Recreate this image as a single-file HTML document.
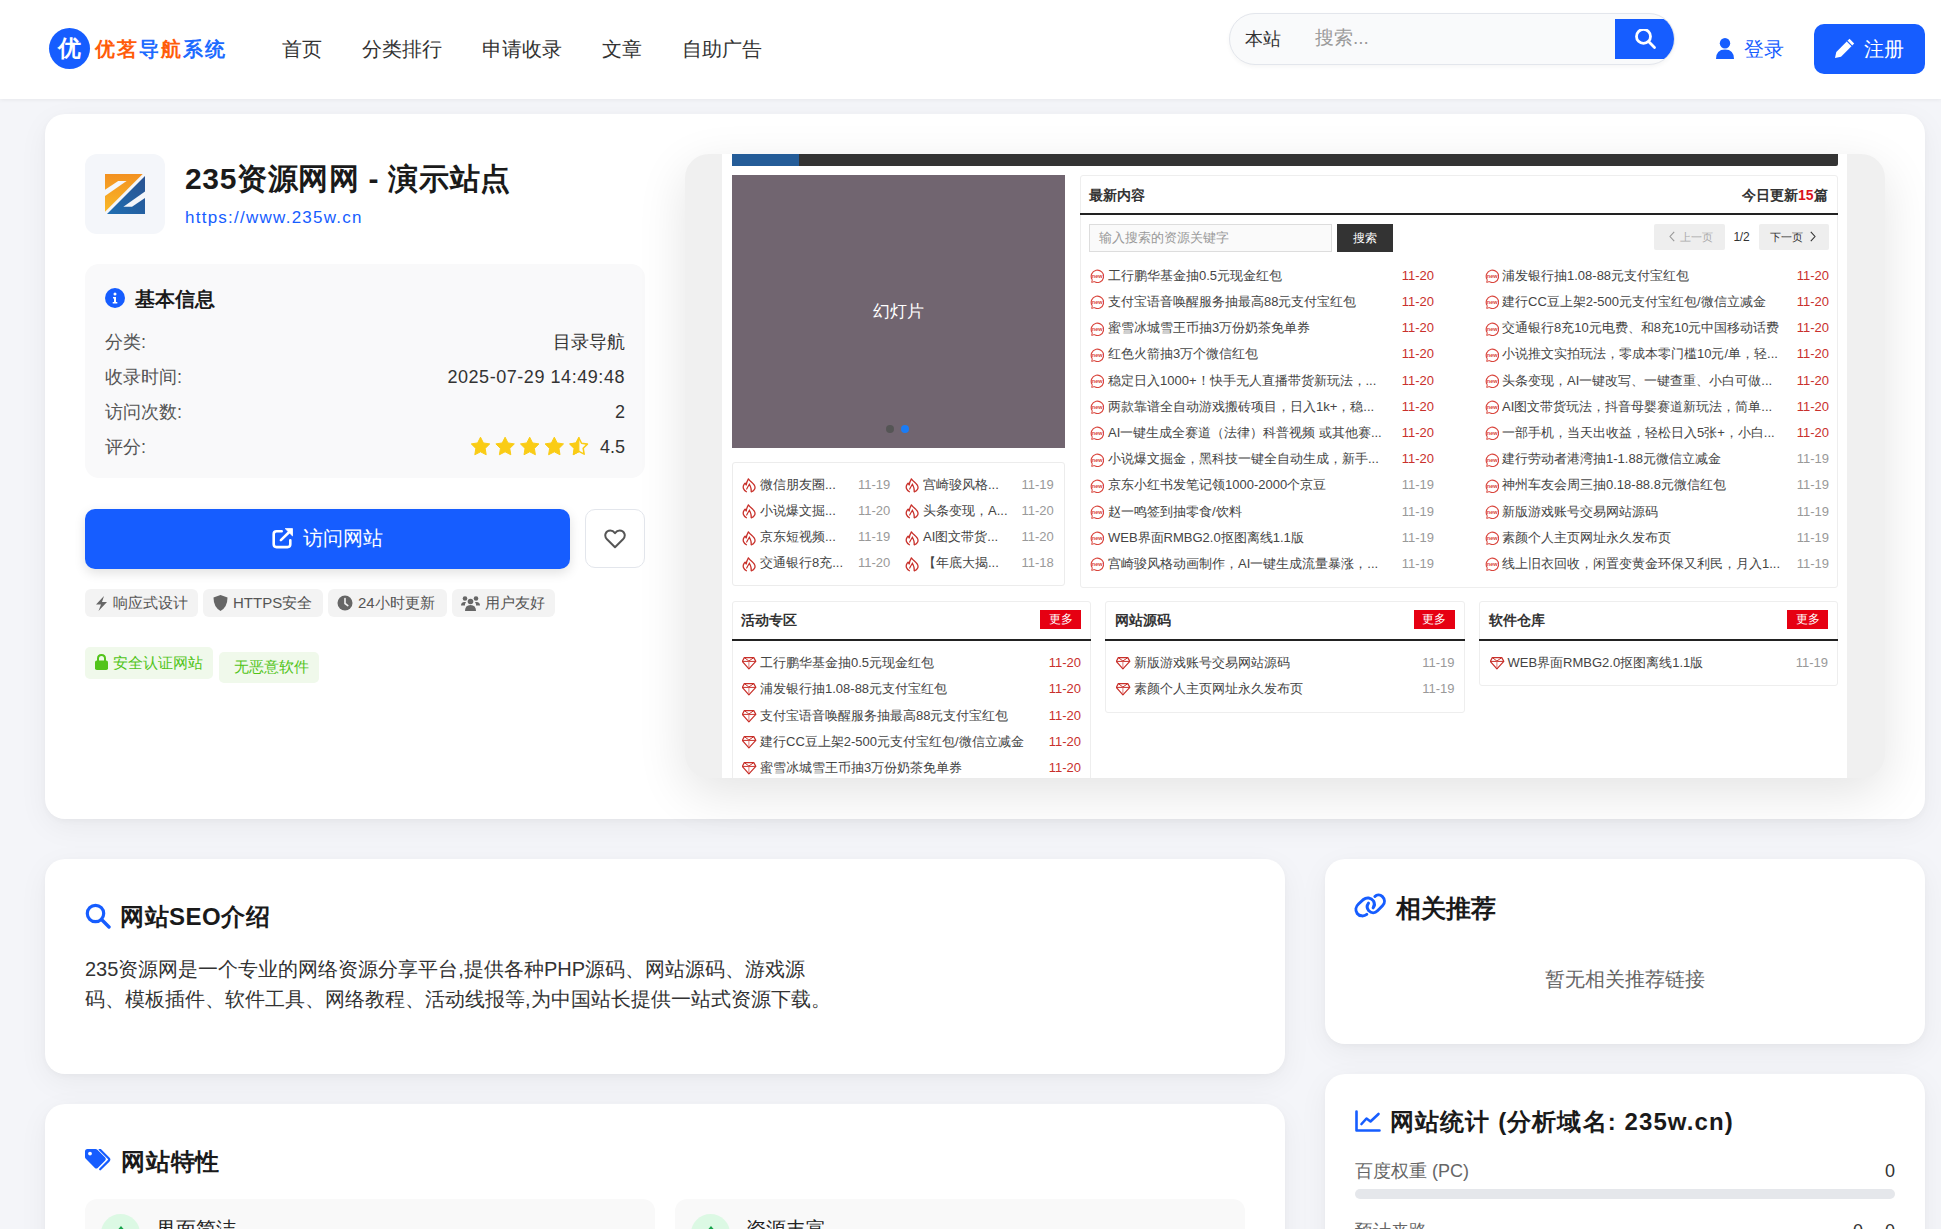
<!DOCTYPE html>
<html><head><meta charset="utf-8">
<style>
*{box-sizing:border-box;margin:0;padding:0}
html,body{width:1941px;height:1229px;overflow:hidden}
body{background:#f4f5f9;font-family:"Liberation Sans",sans-serif;color:#333;position:relative}
.abs{position:absolute}
.hdr{position:absolute;left:0;top:0;width:1941px;height:99px;background:#fff;box-shadow:0 1px 4px rgba(0,0,0,.06)}
.nav{position:absolute;top:36px;font-size:20px;line-height:26px;color:#333;white-space:nowrap}
.card{position:absolute;background:#fff;border-radius:20px;box-shadow:0 2px 6px rgba(0,0,0,.03),0 8px 30px rgba(0,0,0,.05)}
svg{display:block}
.a{position:absolute}
.ic{position:absolute;left:0;top:0}
.info{font-size:18px;line-height:24px;color:#555;white-space:nowrap}
.infov{font-size:18px;line-height:24px;color:#333;white-space:nowrap;text-align:right}
.tag{top:589px;height:28px;border-radius:6px;background:#f3f3f3}
.tag span{position:absolute;top:4px;font-size:15px;line-height:20px;color:#555;white-space:nowrap}
.ti{position:absolute}

</style></head><body>

<!-- HEADER -->
<div class="hdr">
  <div class="abs" style="left:49px;top:28px;width:41px;height:41px;border-radius:50%;background:#165dff;color:#fff;font-size:23px;font-weight:bold;line-height:41px;text-align:center">优</div>
  <div class="abs" style="left:95px;top:35px;font-size:20px;font-weight:bold;letter-spacing:2px;line-height:28px;white-space:nowrap"><span style="color:#ff5c0a">优茗</span><span style="color:#1d6bff">导</span><span style="color:#ff5c0a">航</span><span style="color:#1d6bff">系统</span></div>
  <div class="nav" style="left:282px">首页</div>
  <div class="nav" style="left:362px">分类排行</div>
  <div class="nav" style="left:482px">申请收录</div>
  <div class="nav" style="left:602px">文章</div>
  <div class="nav" style="left:682px">自助广告</div>

  <div class="abs" style="left:1229px;top:13px;width:446px;height:52px;border:1px solid #e3e6ec;border-radius:26px;background:#f9fafb;box-shadow:0 2px 4px rgba(0,0,0,.04);overflow:hidden">
    <div class="abs" style="left:385px;top:5px;width:80px;height:40px;background:#165dff"></div>
  </div>
  <div class="abs" style="left:1245px;top:27px;font-size:18px;line-height:24px;color:#333">本站</div>
  <div class="abs" style="left:1315px;top:26px;font-size:19px;line-height:24px;color:#999">搜索...</div>
  <svg class="abs" style="left:1635px;top:29px" width="22" height="22" viewBox="0 0 22 22"><circle cx="8.5" cy="7.4" r="7" fill="none" stroke="#fff" stroke-width="2.8"/><path d="M13.8 12.8 L19.5 18.4" stroke="#fff" stroke-width="2.8" stroke-linecap="round"/></svg>

  <svg class="abs" style="left:1716px;top:38px" width="18" height="21" viewBox="0 0 18 21"><circle cx="9" cy="5.2" r="5.2" fill="#165dff"/><path d="M0 21 Q0 11.5 9 11.5 Q18 11.5 18 21 Z" fill="#165dff"/></svg>
  <div class="abs" style="left:1744px;top:36px;font-size:20px;line-height:26px;color:#165dff">登录</div>

  <div class="abs" style="left:1814px;top:24px;width:111px;height:50px;border-radius:10px;background:#165dff"></div>
  <svg class="abs" style="left:1834px;top:38px" width="21" height="21" viewBox="0 0 21 21"><path d="M15.5 0.8 L20.2 5.5 L7 18.7 L1 20 L2.3 14 Z" fill="#fff"/><path d="M13.2 3.1 L17.9 7.8" stroke="#165dff" stroke-width="1.2"/></svg>
  <div class="abs" style="left:1864px;top:36px;font-size:20px;line-height:26px;color:#fff">注册</div>
</div>

<!-- CARD 1 -->
<div class="card" style="left:45px;top:114px;width:1880px;height:705px"></div>

<div id="c1">
  <div class="abs" style="left:85px;top:154px;width:80px;height:80px;border-radius:12px;background:#f4f6fa"></div>
  <svg class="abs" style="left:105px;top:174px" width="40" height="40" viewBox="0 0 40 40">
    <defs>
      <linearGradient id="go" x1="0" y1="0" x2="0" y2="1"><stop offset="0" stop-color="#f39120"/><stop offset="1" stop-color="#f9b928"/></linearGradient>
      <linearGradient id="gb" x1="1" y1="0" x2="0" y2="1"><stop offset="0" stop-color="#2a5290"/><stop offset="1" stop-color="#1f6fb3"/></linearGradient>
    </defs>
    <path d="M0 0 H37.7 L0 37.7 Z" fill="url(#go)"/>
    <path d="M0 15.7 L13.2 7 H21.6 L0 21.9 Z" fill="#f4f6fa"/>
    <path d="M40 2 V40 H2 Z" fill="url(#gb)"/>
    <path d="M40 17.4 L18.4 32.8 H27 L40 24 Z" fill="#f4f6fa"/>
  </svg>
  <div class="abs" style="left:185px;top:161px;font-size:30px;line-height:36px;font-weight:bold;color:#1a1a1a;letter-spacing:0.65px;white-space:nowrap">235资源网网 - 演示站点</div>
  <div class="abs" style="left:185px;top:207px;font-size:17px;line-height:22px;color:#165dff;letter-spacing:1.25px;white-space:nowrap">https://www.235w.cn</div>

  <div class="abs" style="left:85px;top:264px;width:560px;height:214px;border-radius:14px;background:#f9f9fa"></div>
  <svg class="abs" style="left:105px;top:288px" width="20" height="20" viewBox="0 0 20 20"><circle cx="10" cy="10" r="10" fill="#165dff"/><circle cx="10" cy="6" r="1.5" fill="#fff"/><path d="M8 9 H11 V14 H12.3 V15.5 H7.7 V14 H9 V10.5 H8 Z" fill="#fff"/></svg>
  <div class="abs" style="left:135px;top:286px;font-size:20px;line-height:26px;font-weight:bold;color:#1a1a1a">基本信息</div>

  <div class="abs info" style="left:105px;top:330px">分类:</div>
  <div class="abs info" style="left:105px;top:365px">收录时间:</div>
  <div class="abs info" style="left:105px;top:400px">访问次数:</div>
  <div class="abs info" style="left:105px;top:435px">评分:</div>
  <div class="abs infov" style="right:1316px;top:330px">目录导航</div>
  <div class="abs infov" style="right:1316px;top:365px;letter-spacing:0.55px">2025-07-29 14:49:48</div>
  <div class="abs infov" style="right:1316px;top:400px">2</div>
  <div class="abs infov" style="right:1316px;top:435px">4.5</div>
  <svg class="abs" style="left:470.8px;top:437px" width="122" height="20" viewBox="0 0 122 20">
    <defs><path id="st" d="M9.50 0.20 L12.38 5.94 L18.73 6.90 L14.16 11.41 L15.20 17.75 L9.50 14.80 L3.80 17.75 L4.84 11.41 L0.27 6.90 L6.62 5.94 Z" stroke-linejoin="round"/></defs>
    <use href="#st" x="0" y="0" fill="#facc15" stroke="#facc15" stroke-width="1"/>
    <use href="#st" x="24.6" y="0" fill="#facc15" stroke="#facc15" stroke-width="1"/>
    <use href="#st" x="49.2" y="0" fill="#facc15" stroke="#facc15" stroke-width="1"/>
    <use href="#st" x="73.8" y="0" fill="#facc15" stroke="#facc15" stroke-width="1"/>
    <g transform="translate(98.4,0)"><path d="M9.50 0.20 L12.38 5.94 L18.73 6.90 L14.16 11.41 L15.20 17.75 L9.50 14.80 L3.80 17.75 L4.84 11.41 L0.27 6.90 L6.62 5.94 Z" fill="none" stroke="#facc15" stroke-width="1.7" stroke-linejoin="round" transform="translate(9.5 9.9) scale(0.92) translate(-9.5 -9.9)"/><path d="M9.50 0.20 L9.50 14.80 L3.80 17.75 L4.84 11.41 L0.27 6.90 L6.62 5.94 Z" fill="#facc15" stroke="#facc15" stroke-width="1" stroke-linejoin="round"/></g>
  </svg>

  <div class="abs" style="left:85px;top:509px;width:485px;height:59.5px;border-radius:10px;background:#165dff;box-shadow:0 4px 12px rgba(0,0,0,.12)"></div>
  <svg class="abs" style="left:272px;top:528px" width="22" height="22" viewBox="0 0 22 22"><path d="M9.7 3.2 H4.5 Q1.7 3.2 1.7 6 V16.3 Q1.7 19.1 4.5 19.1 H15.5 Q18.3 19.1 18.3 16.3 V12.2" fill="none" stroke="#fff" stroke-width="2.6" stroke-linecap="round" stroke-linejoin="round"/><path d="M8.9 12.1 L17 4.3" stroke="#fff" stroke-width="2.6" stroke-linecap="round"/><path d="M13.2 0.6 H20.5 V7.9 Z" fill="#fff" stroke="#fff" stroke-width="0.8" stroke-linejoin="round"/></svg>
  <div class="abs" style="left:303px;top:525px;font-size:20px;line-height:26px;color:#fff">访问网站</div>

  <div class="abs" style="left:585px;top:509px;width:60px;height:59px;border-radius:10px;border:1px solid #e3e6ec;background:#fff"></div>
  <svg class="abs" style="left:604px;top:529px" width="22" height="20" viewBox="0 0 22 20"><path d="M11 18.2 L3 10.3 Q0.5 7.6 1.6 4.6 Q2.9 1.5 6.3 1.5 Q9 1.5 11 4.2 Q13 1.5 15.7 1.5 Q19.1 1.5 20.4 4.6 Q21.5 7.6 19 10.3 Z" fill="none" stroke="#555" stroke-width="2" stroke-linejoin="round"/></svg>

  <div class="abs tag" style="left:85px;width:113px"><svg class="ti" style="left:10px;top:7px" width="13" height="15" viewBox="0 0 13 15"><path d="M9 0 L1 8.5 H6 L3.5 15 L12 6 H7 Z" fill="#666"/></svg><span style="left:28px">响应式设计</span></div>
  <div class="abs tag" style="left:203px;width:120px"><svg class="ti" style="left:10px;top:6px" width="15" height="16" viewBox="0 0 15 16"><path d="M7.5 0 L14.5 2.5 Q14.5 12 7.5 16 Q0.5 12 0.5 2.5 Z" fill="#666"/></svg><span style="left:30px">HTTPS安全</span></div>
  <div class="abs tag" style="left:328px;width:119px"><svg class="ti" style="left:9px;top:6px" width="16" height="16" viewBox="0 0 16 16"><circle cx="8" cy="8" r="7.5" fill="#666"/><path d="M8 3.5 V8.5 L10.8 10.6" fill="none" stroke="#f3f3f3" stroke-width="1.6" stroke-linecap="round"/></svg><span style="left:30px">24小时更新</span></div>
  <div class="abs tag" style="left:452px;width:103px"><svg class="ti" style="left:9px;top:7px" width="19" height="15" viewBox="0 0 19 15"><circle cx="4" cy="2.5" r="2.3" fill="#666"/><circle cx="15" cy="2.5" r="2.3" fill="#666"/><circle cx="9.5" cy="5.5" r="2.8" fill="#666"/><path d="M0 9.5 Q0 6 3.5 6 H5 Q3.5 8 4 9.5 Z M19 9.5 Q19 6 15.5 6 H14 Q15.5 8 15 9.5 Z" fill="#666"/><path d="M4 15 Q4 9 9.5 9 Q15 9 15 15 Z" fill="#666"/></svg><span style="left:33px">用户友好</span></div>

  <div class="abs" style="left:85px;top:647px;width:128px;height:32px;border-radius:5px;background:#f0f9eb"></div>
  <svg class="abs" style="left:95px;top:654px" width="13" height="16" viewBox="0 0 13 16"><path d="M3 7 V4.5 Q3 1 6.5 1 Q10 1 10 4.5 V7" fill="none" stroke="#52c41a" stroke-width="2"/><rect x="0" y="6.5" width="13" height="9.5" rx="1.8" fill="#52c41a"/></svg>
  <div class="abs" style="left:113px;top:653px;font-size:15px;line-height:20px;color:#52c41a">安全认证网站</div>
  <div class="abs" style="left:219px;top:652px;width:100px;height:31px;border-radius:5px;background:#f0f9eb"></div>
  <div class="abs" style="left:234px;top:657px;font-size:15px;line-height:20px;color:#52c41a">无恶意软件</div>
</div>

<!-- SCREENSHOT -->
<div id="shot">
<div style="position:absolute;left:685px;top:154px;width:1200px;height:624px;background:#f0f0f0;border-radius:24px;box-shadow:0 15px 50px rgba(0,0,0,.11)"></div>
<div style="position:absolute;left:722px;top:154px;width:1125px;height:624px;background:#fff;overflow:hidden">
<div class="a" style="left:10.0px;top:0.0px;width:1106px;height:12px;background:#333;border-radius:0 0 2px 0"></div>
<div class="a" style="left:10.0px;top:0.0px;width:67px;height:12px;background:#245c98"></div>
<div class="a" style="left:10.0px;top:21.0px;width:333px;height:273px;background:#716570"></div>
<div class="a" style="left:10.0px;top:146.0px;width:333px;text-align:center;font-size:17px;line-height:24px;color:#fff">幻灯片</div>
<div class="a" style="left:164.0px;top:271.0px;width:8px;height:8px;border-radius:50%;background:#555"></div>
<div class="a" style="left:179.0px;top:271.0px;width:8px;height:8px;border-radius:50%;background:#1a7cf5"></div>
<div class="a" style="left:10.0px;top:308.0px;width:333px;height:124px;border:1px solid #ececec;border-radius:3px"></div>
<div class="a" style="left:20.0px;top:324.1px;width:15px;height:15px"><svg class="ic" width="15" height="15" viewBox="0 0 15 15"><path d="M4.4 13.8 C1.5 12.2 0.2 9.2 2.1 6.4 L3.1 5.1 L4.2 7 C4.5 4.6 5.4 2.6 6.4 0.9 C8.2 3.4 10.4 4.6 12.2 7 C14 9.6 12.6 12.8 9.3 13.9" fill="none" stroke="#c8302a" stroke-width="1.3" stroke-linejoin="round" stroke-linecap="round"/><path d="M4.7 11 C5.6 9.2 6.6 7.6 7.4 6.3 C8.5 8.4 9.7 11 9.2 13.4" fill="none" stroke="#c8302a" stroke-width="1.2" stroke-linecap="round"/></svg></div>
<div class="a" style="left:38.0px;top:322.6px;font-size:13px;line-height:16px;color:#444;white-space:nowrap">微信朋友圈...</div>
<div class="a" style="left:136.0px;top:322.6px;font-size:13px;line-height:16px;color:#999;white-space:nowrap">11-19</div>
<div class="a" style="left:183.0px;top:324.1px;width:15px;height:15px"><svg class="ic" width="15" height="15" viewBox="0 0 15 15"><path d="M4.4 13.8 C1.5 12.2 0.2 9.2 2.1 6.4 L3.1 5.1 L4.2 7 C4.5 4.6 5.4 2.6 6.4 0.9 C8.2 3.4 10.4 4.6 12.2 7 C14 9.6 12.6 12.8 9.3 13.9" fill="none" stroke="#c8302a" stroke-width="1.3" stroke-linejoin="round" stroke-linecap="round"/><path d="M4.7 11 C5.6 9.2 6.6 7.6 7.4 6.3 C8.5 8.4 9.7 11 9.2 13.4" fill="none" stroke="#c8302a" stroke-width="1.2" stroke-linecap="round"/></svg></div>
<div class="a" style="left:201.0px;top:322.6px;font-size:13px;line-height:16px;color:#444;white-space:nowrap">宫崎骏风格...</div>
<div class="a" style="left:299.5px;top:322.6px;font-size:13px;line-height:16px;color:#999;white-space:nowrap">11-19</div>
<div class="a" style="left:20.0px;top:350.4px;width:15px;height:15px"><svg class="ic" width="15" height="15" viewBox="0 0 15 15"><path d="M4.4 13.8 C1.5 12.2 0.2 9.2 2.1 6.4 L3.1 5.1 L4.2 7 C4.5 4.6 5.4 2.6 6.4 0.9 C8.2 3.4 10.4 4.6 12.2 7 C14 9.6 12.6 12.8 9.3 13.9" fill="none" stroke="#c8302a" stroke-width="1.3" stroke-linejoin="round" stroke-linecap="round"/><path d="M4.7 11 C5.6 9.2 6.6 7.6 7.4 6.3 C8.5 8.4 9.7 11 9.2 13.4" fill="none" stroke="#c8302a" stroke-width="1.2" stroke-linecap="round"/></svg></div>
<div class="a" style="left:38.0px;top:348.9px;font-size:13px;line-height:16px;color:#444;white-space:nowrap">小说爆文掘...</div>
<div class="a" style="left:136.0px;top:348.9px;font-size:13px;line-height:16px;color:#999;white-space:nowrap">11-20</div>
<div class="a" style="left:183.0px;top:350.4px;width:15px;height:15px"><svg class="ic" width="15" height="15" viewBox="0 0 15 15"><path d="M4.4 13.8 C1.5 12.2 0.2 9.2 2.1 6.4 L3.1 5.1 L4.2 7 C4.5 4.6 5.4 2.6 6.4 0.9 C8.2 3.4 10.4 4.6 12.2 7 C14 9.6 12.6 12.8 9.3 13.9" fill="none" stroke="#c8302a" stroke-width="1.3" stroke-linejoin="round" stroke-linecap="round"/><path d="M4.7 11 C5.6 9.2 6.6 7.6 7.4 6.3 C8.5 8.4 9.7 11 9.2 13.4" fill="none" stroke="#c8302a" stroke-width="1.2" stroke-linecap="round"/></svg></div>
<div class="a" style="left:201.0px;top:348.9px;font-size:13px;line-height:16px;color:#444;white-space:nowrap">头条变现，A...</div>
<div class="a" style="left:299.5px;top:348.9px;font-size:13px;line-height:16px;color:#999;white-space:nowrap">11-20</div>
<div class="a" style="left:20.0px;top:376.6px;width:15px;height:15px"><svg class="ic" width="15" height="15" viewBox="0 0 15 15"><path d="M4.4 13.8 C1.5 12.2 0.2 9.2 2.1 6.4 L3.1 5.1 L4.2 7 C4.5 4.6 5.4 2.6 6.4 0.9 C8.2 3.4 10.4 4.6 12.2 7 C14 9.6 12.6 12.8 9.3 13.9" fill="none" stroke="#c8302a" stroke-width="1.3" stroke-linejoin="round" stroke-linecap="round"/><path d="M4.7 11 C5.6 9.2 6.6 7.6 7.4 6.3 C8.5 8.4 9.7 11 9.2 13.4" fill="none" stroke="#c8302a" stroke-width="1.2" stroke-linecap="round"/></svg></div>
<div class="a" style="left:38.0px;top:375.1px;font-size:13px;line-height:16px;color:#444;white-space:nowrap">京东短视频...</div>
<div class="a" style="left:136.0px;top:375.1px;font-size:13px;line-height:16px;color:#999;white-space:nowrap">11-19</div>
<div class="a" style="left:183.0px;top:376.6px;width:15px;height:15px"><svg class="ic" width="15" height="15" viewBox="0 0 15 15"><path d="M4.4 13.8 C1.5 12.2 0.2 9.2 2.1 6.4 L3.1 5.1 L4.2 7 C4.5 4.6 5.4 2.6 6.4 0.9 C8.2 3.4 10.4 4.6 12.2 7 C14 9.6 12.6 12.8 9.3 13.9" fill="none" stroke="#c8302a" stroke-width="1.3" stroke-linejoin="round" stroke-linecap="round"/><path d="M4.7 11 C5.6 9.2 6.6 7.6 7.4 6.3 C8.5 8.4 9.7 11 9.2 13.4" fill="none" stroke="#c8302a" stroke-width="1.2" stroke-linecap="round"/></svg></div>
<div class="a" style="left:201.0px;top:375.1px;font-size:13px;line-height:16px;color:#444;white-space:nowrap">AI图文带货...</div>
<div class="a" style="left:299.5px;top:375.1px;font-size:13px;line-height:16px;color:#999;white-space:nowrap">11-20</div>
<div class="a" style="left:20.0px;top:402.9px;width:15px;height:15px"><svg class="ic" width="15" height="15" viewBox="0 0 15 15"><path d="M4.4 13.8 C1.5 12.2 0.2 9.2 2.1 6.4 L3.1 5.1 L4.2 7 C4.5 4.6 5.4 2.6 6.4 0.9 C8.2 3.4 10.4 4.6 12.2 7 C14 9.6 12.6 12.8 9.3 13.9" fill="none" stroke="#c8302a" stroke-width="1.3" stroke-linejoin="round" stroke-linecap="round"/><path d="M4.7 11 C5.6 9.2 6.6 7.6 7.4 6.3 C8.5 8.4 9.7 11 9.2 13.4" fill="none" stroke="#c8302a" stroke-width="1.2" stroke-linecap="round"/></svg></div>
<div class="a" style="left:38.0px;top:401.4px;font-size:13px;line-height:16px;color:#444;white-space:nowrap">交通银行8充...</div>
<div class="a" style="left:136.0px;top:401.4px;font-size:13px;line-height:16px;color:#999;white-space:nowrap">11-20</div>
<div class="a" style="left:183.0px;top:402.9px;width:15px;height:15px"><svg class="ic" width="15" height="15" viewBox="0 0 15 15"><path d="M4.4 13.8 C1.5 12.2 0.2 9.2 2.1 6.4 L3.1 5.1 L4.2 7 C4.5 4.6 5.4 2.6 6.4 0.9 C8.2 3.4 10.4 4.6 12.2 7 C14 9.6 12.6 12.8 9.3 13.9" fill="none" stroke="#c8302a" stroke-width="1.3" stroke-linejoin="round" stroke-linecap="round"/><path d="M4.7 11 C5.6 9.2 6.6 7.6 7.4 6.3 C8.5 8.4 9.7 11 9.2 13.4" fill="none" stroke="#c8302a" stroke-width="1.2" stroke-linecap="round"/></svg></div>
<div class="a" style="left:201.0px;top:401.4px;font-size:13px;line-height:16px;color:#444;white-space:nowrap">【年底大揭...</div>
<div class="a" style="left:299.5px;top:401.4px;font-size:13px;line-height:16px;color:#999;white-space:nowrap">11-18</div>
<div class="a" style="left:358.0px;top:21.0px;width:758px;height:413px;border:1px solid #eee;border-radius:3px"></div>
<div class="a" style="left:367.0px;top:32.0px;font-size:14px;line-height:18px;font-weight:bold;color:#333;white-space:nowrap">最新内容</div>
<div class="a" style="left:1020.0px;top:32.0px;font-size:14px;line-height:18px;font-weight:bold;color:#333;white-space:nowrap">今日更新<span style="color:#d9141b">15</span>篇</div>
<div class="a" style="left:358.0px;top:59.0px;width:758px;height:2px;background:#222"></div>
<div class="a" style="left:367.0px;top:70.0px;width:243px;height:28px;border:1px solid #ddd;background:#fafafa"></div>
<div class="a" style="left:377.0px;top:76.0px;font-size:13px;line-height:16px;color:#999;white-space:nowrap">输入搜索的资源关键字</div>
<div class="a" style="left:615.0px;top:70.0px;width:56px;height:28px;background:#333;color:#fff;font-size:12px;line-height:28px;text-align:center">搜索</div>
<div class="a" style="left:932.0px;top:70.0px;width:71px;height:26px;background:#eee;border-radius:2px"></div>
<div class="a" style="left:946.5px;top:77.3px;width:6px;height:11px"><svg class="ic" width="6" height="11" viewBox="0 0 6 11"><path d="M5.2 0.8 L1 5.5 L5.2 10.2" fill="none" stroke="#999" stroke-width="1.1"/></svg></div>
<div class="a" style="left:957.5px;top:74.8px;font-size:11px;line-height:16px;color:#aaa;white-space:nowrap">上一页</div>
<div class="a" style="left:1011.5px;top:74.8px;font-size:12px;line-height:16px;color:#333;letter-spacing:-0.3px">1/2</div>
<div class="a" style="left:1037.0px;top:70.0px;width:70px;height:26px;background:#eee;border-radius:2px"></div>
<div class="a" style="left:1048.0px;top:74.8px;font-size:11px;line-height:16px;color:#333;white-space:nowrap">下一页</div>
<div class="a" style="left:1087.5px;top:77.3px;width:6px;height:11px"><svg class="ic" width="6" height="11" viewBox="0 0 6 11"><path d="M0.8 0.8 L5 5.5 L0.8 10.2" fill="none" stroke="#333" stroke-width="1.1"/></svg></div>
<div class="a" style="left:367.5px;top:115.2px;width:14px;height:14px"><svg class="ic" width="14" height="14" viewBox="0 0 14 14"><path d="M2.3 10.8 A6.2 6.2 0 1 1 4.2 12.6" fill="none" stroke="#d9453c" stroke-width="1.15"/><path d="M2.3 10.8 L1.7 13.4 L4.2 12.6" fill="none" stroke="#d9453c" stroke-width="1"/><text x="7.2" y="8.9" font-size="5.6" font-weight="bold" font-family="Liberation Sans" text-anchor="middle" fill="#d9453c">new</text></svg></div>
<div class="a" style="left:386.0px;top:113.7px;font-size:13px;line-height:16px;color:#444;white-space:nowrap">工行鹏华基金抽0.5元现金红包</div>
<div class="a" style="left:612.0px;top:113.7px;width:100px;text-align:right;font-size:13px;line-height:16px;white-space:nowrap;color:#c9302c">11-20</div>
<div class="a" style="left:762.5px;top:115.2px;width:14px;height:14px"><svg class="ic" width="14" height="14" viewBox="0 0 14 14"><path d="M2.3 10.8 A6.2 6.2 0 1 1 4.2 12.6" fill="none" stroke="#d9453c" stroke-width="1.15"/><path d="M2.3 10.8 L1.7 13.4 L4.2 12.6" fill="none" stroke="#d9453c" stroke-width="1"/><text x="7.2" y="8.9" font-size="5.6" font-weight="bold" font-family="Liberation Sans" text-anchor="middle" fill="#d9453c">new</text></svg></div>
<div class="a" style="left:780.0px;top:113.7px;font-size:13px;line-height:16px;color:#444;white-space:nowrap">浦发银行抽1.08-88元支付宝红包</div>
<div class="a" style="left:1007.0px;top:113.7px;width:100px;text-align:right;font-size:13px;line-height:16px;white-space:nowrap;color:#c9302c">11-20</div>
<div class="a" style="left:367.5px;top:141.4px;width:14px;height:14px"><svg class="ic" width="14" height="14" viewBox="0 0 14 14"><path d="M2.3 10.8 A6.2 6.2 0 1 1 4.2 12.6" fill="none" stroke="#d9453c" stroke-width="1.15"/><path d="M2.3 10.8 L1.7 13.4 L4.2 12.6" fill="none" stroke="#d9453c" stroke-width="1"/><text x="7.2" y="8.9" font-size="5.6" font-weight="bold" font-family="Liberation Sans" text-anchor="middle" fill="#d9453c">new</text></svg></div>
<div class="a" style="left:386.0px;top:139.9px;font-size:13px;line-height:16px;color:#444;white-space:nowrap">支付宝语音唤醒服务抽最高88元支付宝红包</div>
<div class="a" style="left:612.0px;top:139.9px;width:100px;text-align:right;font-size:13px;line-height:16px;white-space:nowrap;color:#c9302c">11-20</div>
<div class="a" style="left:762.5px;top:141.4px;width:14px;height:14px"><svg class="ic" width="14" height="14" viewBox="0 0 14 14"><path d="M2.3 10.8 A6.2 6.2 0 1 1 4.2 12.6" fill="none" stroke="#d9453c" stroke-width="1.15"/><path d="M2.3 10.8 L1.7 13.4 L4.2 12.6" fill="none" stroke="#d9453c" stroke-width="1"/><text x="7.2" y="8.9" font-size="5.6" font-weight="bold" font-family="Liberation Sans" text-anchor="middle" fill="#d9453c">new</text></svg></div>
<div class="a" style="left:780.0px;top:139.9px;font-size:13px;line-height:16px;color:#444;white-space:nowrap">建行CC豆上架2-500元支付宝红包/微信立减金</div>
<div class="a" style="left:1007.0px;top:139.9px;width:100px;text-align:right;font-size:13px;line-height:16px;white-space:nowrap;color:#c9302c">11-20</div>
<div class="a" style="left:367.5px;top:167.6px;width:14px;height:14px"><svg class="ic" width="14" height="14" viewBox="0 0 14 14"><path d="M2.3 10.8 A6.2 6.2 0 1 1 4.2 12.6" fill="none" stroke="#d9453c" stroke-width="1.15"/><path d="M2.3 10.8 L1.7 13.4 L4.2 12.6" fill="none" stroke="#d9453c" stroke-width="1"/><text x="7.2" y="8.9" font-size="5.6" font-weight="bold" font-family="Liberation Sans" text-anchor="middle" fill="#d9453c">new</text></svg></div>
<div class="a" style="left:386.0px;top:166.1px;font-size:13px;line-height:16px;color:#444;white-space:nowrap">蜜雪冰城雪王币抽3万份奶茶免单券</div>
<div class="a" style="left:612.0px;top:166.1px;width:100px;text-align:right;font-size:13px;line-height:16px;white-space:nowrap;color:#c9302c">11-20</div>
<div class="a" style="left:762.5px;top:167.6px;width:14px;height:14px"><svg class="ic" width="14" height="14" viewBox="0 0 14 14"><path d="M2.3 10.8 A6.2 6.2 0 1 1 4.2 12.6" fill="none" stroke="#d9453c" stroke-width="1.15"/><path d="M2.3 10.8 L1.7 13.4 L4.2 12.6" fill="none" stroke="#d9453c" stroke-width="1"/><text x="7.2" y="8.9" font-size="5.6" font-weight="bold" font-family="Liberation Sans" text-anchor="middle" fill="#d9453c">new</text></svg></div>
<div class="a" style="left:780.0px;top:166.1px;font-size:13px;line-height:16px;color:#444;white-space:nowrap">交通银行8充10元电费、和8充10元中国移动话费</div>
<div class="a" style="left:1007.0px;top:166.1px;width:100px;text-align:right;font-size:13px;line-height:16px;white-space:nowrap;color:#c9302c">11-20</div>
<div class="a" style="left:367.5px;top:193.8px;width:14px;height:14px"><svg class="ic" width="14" height="14" viewBox="0 0 14 14"><path d="M2.3 10.8 A6.2 6.2 0 1 1 4.2 12.6" fill="none" stroke="#d9453c" stroke-width="1.15"/><path d="M2.3 10.8 L1.7 13.4 L4.2 12.6" fill="none" stroke="#d9453c" stroke-width="1"/><text x="7.2" y="8.9" font-size="5.6" font-weight="bold" font-family="Liberation Sans" text-anchor="middle" fill="#d9453c">new</text></svg></div>
<div class="a" style="left:386.0px;top:192.3px;font-size:13px;line-height:16px;color:#444;white-space:nowrap">红色火箭抽3万个微信红包</div>
<div class="a" style="left:612.0px;top:192.3px;width:100px;text-align:right;font-size:13px;line-height:16px;white-space:nowrap;color:#c9302c">11-20</div>
<div class="a" style="left:762.5px;top:193.8px;width:14px;height:14px"><svg class="ic" width="14" height="14" viewBox="0 0 14 14"><path d="M2.3 10.8 A6.2 6.2 0 1 1 4.2 12.6" fill="none" stroke="#d9453c" stroke-width="1.15"/><path d="M2.3 10.8 L1.7 13.4 L4.2 12.6" fill="none" stroke="#d9453c" stroke-width="1"/><text x="7.2" y="8.9" font-size="5.6" font-weight="bold" font-family="Liberation Sans" text-anchor="middle" fill="#d9453c">new</text></svg></div>
<div class="a" style="left:780.0px;top:192.3px;font-size:13px;line-height:16px;color:#444;white-space:nowrap">小说推文实拍玩法，零成本零门槛10元/单，轻...</div>
<div class="a" style="left:1007.0px;top:192.3px;width:100px;text-align:right;font-size:13px;line-height:16px;white-space:nowrap;color:#c9302c">11-20</div>
<div class="a" style="left:367.5px;top:220.0px;width:14px;height:14px"><svg class="ic" width="14" height="14" viewBox="0 0 14 14"><path d="M2.3 10.8 A6.2 6.2 0 1 1 4.2 12.6" fill="none" stroke="#d9453c" stroke-width="1.15"/><path d="M2.3 10.8 L1.7 13.4 L4.2 12.6" fill="none" stroke="#d9453c" stroke-width="1"/><text x="7.2" y="8.9" font-size="5.6" font-weight="bold" font-family="Liberation Sans" text-anchor="middle" fill="#d9453c">new</text></svg></div>
<div class="a" style="left:386.0px;top:218.5px;font-size:13px;line-height:16px;color:#444;white-space:nowrap">稳定日入1000+！快手无人直播带货新玩法，...</div>
<div class="a" style="left:612.0px;top:218.5px;width:100px;text-align:right;font-size:13px;line-height:16px;white-space:nowrap;color:#c9302c">11-20</div>
<div class="a" style="left:762.5px;top:220.0px;width:14px;height:14px"><svg class="ic" width="14" height="14" viewBox="0 0 14 14"><path d="M2.3 10.8 A6.2 6.2 0 1 1 4.2 12.6" fill="none" stroke="#d9453c" stroke-width="1.15"/><path d="M2.3 10.8 L1.7 13.4 L4.2 12.6" fill="none" stroke="#d9453c" stroke-width="1"/><text x="7.2" y="8.9" font-size="5.6" font-weight="bold" font-family="Liberation Sans" text-anchor="middle" fill="#d9453c">new</text></svg></div>
<div class="a" style="left:780.0px;top:218.5px;font-size:13px;line-height:16px;color:#444;white-space:nowrap">头条变现，AI一键改写、一键查重、小白可做...</div>
<div class="a" style="left:1007.0px;top:218.5px;width:100px;text-align:right;font-size:13px;line-height:16px;white-space:nowrap;color:#c9302c">11-20</div>
<div class="a" style="left:367.5px;top:246.2px;width:14px;height:14px"><svg class="ic" width="14" height="14" viewBox="0 0 14 14"><path d="M2.3 10.8 A6.2 6.2 0 1 1 4.2 12.6" fill="none" stroke="#d9453c" stroke-width="1.15"/><path d="M2.3 10.8 L1.7 13.4 L4.2 12.6" fill="none" stroke="#d9453c" stroke-width="1"/><text x="7.2" y="8.9" font-size="5.6" font-weight="bold" font-family="Liberation Sans" text-anchor="middle" fill="#d9453c">new</text></svg></div>
<div class="a" style="left:386.0px;top:244.7px;font-size:13px;line-height:16px;color:#444;white-space:nowrap">两款靠谱全自动游戏搬砖项目，日入1k+，稳...</div>
<div class="a" style="left:612.0px;top:244.7px;width:100px;text-align:right;font-size:13px;line-height:16px;white-space:nowrap;color:#c9302c">11-20</div>
<div class="a" style="left:762.5px;top:246.2px;width:14px;height:14px"><svg class="ic" width="14" height="14" viewBox="0 0 14 14"><path d="M2.3 10.8 A6.2 6.2 0 1 1 4.2 12.6" fill="none" stroke="#d9453c" stroke-width="1.15"/><path d="M2.3 10.8 L1.7 13.4 L4.2 12.6" fill="none" stroke="#d9453c" stroke-width="1"/><text x="7.2" y="8.9" font-size="5.6" font-weight="bold" font-family="Liberation Sans" text-anchor="middle" fill="#d9453c">new</text></svg></div>
<div class="a" style="left:780.0px;top:244.7px;font-size:13px;line-height:16px;color:#444;white-space:nowrap">AI图文带货玩法，抖音母婴赛道新玩法，简单...</div>
<div class="a" style="left:1007.0px;top:244.7px;width:100px;text-align:right;font-size:13px;line-height:16px;white-space:nowrap;color:#c9302c">11-20</div>
<div class="a" style="left:367.5px;top:272.4px;width:14px;height:14px"><svg class="ic" width="14" height="14" viewBox="0 0 14 14"><path d="M2.3 10.8 A6.2 6.2 0 1 1 4.2 12.6" fill="none" stroke="#d9453c" stroke-width="1.15"/><path d="M2.3 10.8 L1.7 13.4 L4.2 12.6" fill="none" stroke="#d9453c" stroke-width="1"/><text x="7.2" y="8.9" font-size="5.6" font-weight="bold" font-family="Liberation Sans" text-anchor="middle" fill="#d9453c">new</text></svg></div>
<div class="a" style="left:386.0px;top:270.9px;font-size:13px;line-height:16px;color:#444;white-space:nowrap">AI一键生成全赛道（法律）科普视频 或其他赛...</div>
<div class="a" style="left:612.0px;top:270.9px;width:100px;text-align:right;font-size:13px;line-height:16px;white-space:nowrap;color:#c9302c">11-20</div>
<div class="a" style="left:762.5px;top:272.4px;width:14px;height:14px"><svg class="ic" width="14" height="14" viewBox="0 0 14 14"><path d="M2.3 10.8 A6.2 6.2 0 1 1 4.2 12.6" fill="none" stroke="#d9453c" stroke-width="1.15"/><path d="M2.3 10.8 L1.7 13.4 L4.2 12.6" fill="none" stroke="#d9453c" stroke-width="1"/><text x="7.2" y="8.9" font-size="5.6" font-weight="bold" font-family="Liberation Sans" text-anchor="middle" fill="#d9453c">new</text></svg></div>
<div class="a" style="left:780.0px;top:270.9px;font-size:13px;line-height:16px;color:#444;white-space:nowrap">一部手机，当天出收益，轻松日入5张+，小白...</div>
<div class="a" style="left:1007.0px;top:270.9px;width:100px;text-align:right;font-size:13px;line-height:16px;white-space:nowrap;color:#c9302c">11-20</div>
<div class="a" style="left:367.5px;top:298.6px;width:14px;height:14px"><svg class="ic" width="14" height="14" viewBox="0 0 14 14"><path d="M2.3 10.8 A6.2 6.2 0 1 1 4.2 12.6" fill="none" stroke="#d9453c" stroke-width="1.15"/><path d="M2.3 10.8 L1.7 13.4 L4.2 12.6" fill="none" stroke="#d9453c" stroke-width="1"/><text x="7.2" y="8.9" font-size="5.6" font-weight="bold" font-family="Liberation Sans" text-anchor="middle" fill="#d9453c">new</text></svg></div>
<div class="a" style="left:386.0px;top:297.1px;font-size:13px;line-height:16px;color:#444;white-space:nowrap">小说爆文掘金，黑科技一键全自动生成，新手...</div>
<div class="a" style="left:612.0px;top:297.1px;width:100px;text-align:right;font-size:13px;line-height:16px;white-space:nowrap;color:#c9302c">11-20</div>
<div class="a" style="left:762.5px;top:298.6px;width:14px;height:14px"><svg class="ic" width="14" height="14" viewBox="0 0 14 14"><path d="M2.3 10.8 A6.2 6.2 0 1 1 4.2 12.6" fill="none" stroke="#d9453c" stroke-width="1.15"/><path d="M2.3 10.8 L1.7 13.4 L4.2 12.6" fill="none" stroke="#d9453c" stroke-width="1"/><text x="7.2" y="8.9" font-size="5.6" font-weight="bold" font-family="Liberation Sans" text-anchor="middle" fill="#d9453c">new</text></svg></div>
<div class="a" style="left:780.0px;top:297.1px;font-size:13px;line-height:16px;color:#444;white-space:nowrap">建行劳动者港湾抽1-1.88元微信立减金</div>
<div class="a" style="left:1007.0px;top:297.1px;width:100px;text-align:right;font-size:13px;line-height:16px;white-space:nowrap;color:#999">11-19</div>
<div class="a" style="left:367.5px;top:324.8px;width:14px;height:14px"><svg class="ic" width="14" height="14" viewBox="0 0 14 14"><path d="M2.3 10.8 A6.2 6.2 0 1 1 4.2 12.6" fill="none" stroke="#d9453c" stroke-width="1.15"/><path d="M2.3 10.8 L1.7 13.4 L4.2 12.6" fill="none" stroke="#d9453c" stroke-width="1"/><text x="7.2" y="8.9" font-size="5.6" font-weight="bold" font-family="Liberation Sans" text-anchor="middle" fill="#d9453c">new</text></svg></div>
<div class="a" style="left:386.0px;top:323.3px;font-size:13px;line-height:16px;color:#444;white-space:nowrap">京东小红书发笔记领1000-2000个京豆</div>
<div class="a" style="left:612.0px;top:323.3px;width:100px;text-align:right;font-size:13px;line-height:16px;white-space:nowrap;color:#999">11-19</div>
<div class="a" style="left:762.5px;top:324.8px;width:14px;height:14px"><svg class="ic" width="14" height="14" viewBox="0 0 14 14"><path d="M2.3 10.8 A6.2 6.2 0 1 1 4.2 12.6" fill="none" stroke="#d9453c" stroke-width="1.15"/><path d="M2.3 10.8 L1.7 13.4 L4.2 12.6" fill="none" stroke="#d9453c" stroke-width="1"/><text x="7.2" y="8.9" font-size="5.6" font-weight="bold" font-family="Liberation Sans" text-anchor="middle" fill="#d9453c">new</text></svg></div>
<div class="a" style="left:780.0px;top:323.3px;font-size:13px;line-height:16px;color:#444;white-space:nowrap">神州车友会周三抽0.18-88.8元微信红包</div>
<div class="a" style="left:1007.0px;top:323.3px;width:100px;text-align:right;font-size:13px;line-height:16px;white-space:nowrap;color:#999">11-19</div>
<div class="a" style="left:367.5px;top:351.0px;width:14px;height:14px"><svg class="ic" width="14" height="14" viewBox="0 0 14 14"><path d="M2.3 10.8 A6.2 6.2 0 1 1 4.2 12.6" fill="none" stroke="#d9453c" stroke-width="1.15"/><path d="M2.3 10.8 L1.7 13.4 L4.2 12.6" fill="none" stroke="#d9453c" stroke-width="1"/><text x="7.2" y="8.9" font-size="5.6" font-weight="bold" font-family="Liberation Sans" text-anchor="middle" fill="#d9453c">new</text></svg></div>
<div class="a" style="left:386.0px;top:349.5px;font-size:13px;line-height:16px;color:#444;white-space:nowrap">赵一鸣签到抽零食/饮料</div>
<div class="a" style="left:612.0px;top:349.5px;width:100px;text-align:right;font-size:13px;line-height:16px;white-space:nowrap;color:#999">11-19</div>
<div class="a" style="left:762.5px;top:351.0px;width:14px;height:14px"><svg class="ic" width="14" height="14" viewBox="0 0 14 14"><path d="M2.3 10.8 A6.2 6.2 0 1 1 4.2 12.6" fill="none" stroke="#d9453c" stroke-width="1.15"/><path d="M2.3 10.8 L1.7 13.4 L4.2 12.6" fill="none" stroke="#d9453c" stroke-width="1"/><text x="7.2" y="8.9" font-size="5.6" font-weight="bold" font-family="Liberation Sans" text-anchor="middle" fill="#d9453c">new</text></svg></div>
<div class="a" style="left:780.0px;top:349.5px;font-size:13px;line-height:16px;color:#444;white-space:nowrap">新版游戏账号交易网站源码</div>
<div class="a" style="left:1007.0px;top:349.5px;width:100px;text-align:right;font-size:13px;line-height:16px;white-space:nowrap;color:#999">11-19</div>
<div class="a" style="left:367.5px;top:377.2px;width:14px;height:14px"><svg class="ic" width="14" height="14" viewBox="0 0 14 14"><path d="M2.3 10.8 A6.2 6.2 0 1 1 4.2 12.6" fill="none" stroke="#d9453c" stroke-width="1.15"/><path d="M2.3 10.8 L1.7 13.4 L4.2 12.6" fill="none" stroke="#d9453c" stroke-width="1"/><text x="7.2" y="8.9" font-size="5.6" font-weight="bold" font-family="Liberation Sans" text-anchor="middle" fill="#d9453c">new</text></svg></div>
<div class="a" style="left:386.0px;top:375.7px;font-size:13px;line-height:16px;color:#444;white-space:nowrap">WEB界面RMBG2.0抠图离线1.1版</div>
<div class="a" style="left:612.0px;top:375.7px;width:100px;text-align:right;font-size:13px;line-height:16px;white-space:nowrap;color:#999">11-19</div>
<div class="a" style="left:762.5px;top:377.2px;width:14px;height:14px"><svg class="ic" width="14" height="14" viewBox="0 0 14 14"><path d="M2.3 10.8 A6.2 6.2 0 1 1 4.2 12.6" fill="none" stroke="#d9453c" stroke-width="1.15"/><path d="M2.3 10.8 L1.7 13.4 L4.2 12.6" fill="none" stroke="#d9453c" stroke-width="1"/><text x="7.2" y="8.9" font-size="5.6" font-weight="bold" font-family="Liberation Sans" text-anchor="middle" fill="#d9453c">new</text></svg></div>
<div class="a" style="left:780.0px;top:375.7px;font-size:13px;line-height:16px;color:#444;white-space:nowrap">素颜个人主页网址永久发布页</div>
<div class="a" style="left:1007.0px;top:375.7px;width:100px;text-align:right;font-size:13px;line-height:16px;white-space:nowrap;color:#999">11-19</div>
<div class="a" style="left:367.5px;top:403.4px;width:14px;height:14px"><svg class="ic" width="14" height="14" viewBox="0 0 14 14"><path d="M2.3 10.8 A6.2 6.2 0 1 1 4.2 12.6" fill="none" stroke="#d9453c" stroke-width="1.15"/><path d="M2.3 10.8 L1.7 13.4 L4.2 12.6" fill="none" stroke="#d9453c" stroke-width="1"/><text x="7.2" y="8.9" font-size="5.6" font-weight="bold" font-family="Liberation Sans" text-anchor="middle" fill="#d9453c">new</text></svg></div>
<div class="a" style="left:386.0px;top:401.9px;font-size:13px;line-height:16px;color:#444;white-space:nowrap">宫崎骏风格动画制作，AI一键生成流量暴涨，...</div>
<div class="a" style="left:612.0px;top:401.9px;width:100px;text-align:right;font-size:13px;line-height:16px;white-space:nowrap;color:#999">11-19</div>
<div class="a" style="left:762.5px;top:403.4px;width:14px;height:14px"><svg class="ic" width="14" height="14" viewBox="0 0 14 14"><path d="M2.3 10.8 A6.2 6.2 0 1 1 4.2 12.6" fill="none" stroke="#d9453c" stroke-width="1.15"/><path d="M2.3 10.8 L1.7 13.4 L4.2 12.6" fill="none" stroke="#d9453c" stroke-width="1"/><text x="7.2" y="8.9" font-size="5.6" font-weight="bold" font-family="Liberation Sans" text-anchor="middle" fill="#d9453c">new</text></svg></div>
<div class="a" style="left:780.0px;top:401.9px;font-size:13px;line-height:16px;color:#444;white-space:nowrap">线上旧衣回收，闲置变黄金环保又利民，月入1...</div>
<div class="a" style="left:1007.0px;top:401.9px;width:100px;text-align:right;font-size:13px;line-height:16px;white-space:nowrap;color:#999">11-19</div>
<div class="a" style="left:9.5px;top:446.5px;width:359.5px;height:189.5px;border:1px solid #eee;border-radius:3px"></div>
<div class="a" style="left:19.0px;top:457.0px;font-size:14px;line-height:18px;font-weight:bold;color:#333;white-space:nowrap">活动专区</div>
<div class="a" style="left:318.0px;top:456.0px;width:41px;height:19px;background:#e60012;color:#fff;font-size:12px;line-height:19px;text-align:center">更多</div>
<div class="a" style="left:9.5px;top:485.0px;width:359.5px;height:2px;background:#222"></div>
<div class="a" style="left:20.0px;top:503.0px;width:15px;height:13px"><svg class="ic" width="15" height="13" viewBox="0 0 15 13"><path d="M2.3 0.6 H11.8 L13.8 4.4 L6.9 11.9 L0.3 4.4 Z" fill="none" stroke="#c8302a" stroke-width="1.2" stroke-linejoin="round"/><path d="M0.9 4.4 H13.2 M2.3 0.6 L6.9 4 L11.8 0.6" fill="none" stroke="#c8302a" stroke-width="1"/><path d="M6.9 4.4 V11" stroke="#e06a66" stroke-width="0.9"/></svg></div>
<div class="a" style="left:38.0px;top:501.0px;font-size:13px;line-height:16px;color:#444;white-space:nowrap">工行鹏华基金抽0.5元现金红包</div>
<div class="a" style="left:259.0px;top:501.0px;width:100px;text-align:right;font-size:13px;line-height:16px;white-space:nowrap;color:#c9302c">11-20</div>
<div class="a" style="left:20.0px;top:529.2px;width:15px;height:13px"><svg class="ic" width="15" height="13" viewBox="0 0 15 13"><path d="M2.3 0.6 H11.8 L13.8 4.4 L6.9 11.9 L0.3 4.4 Z" fill="none" stroke="#c8302a" stroke-width="1.2" stroke-linejoin="round"/><path d="M0.9 4.4 H13.2 M2.3 0.6 L6.9 4 L11.8 0.6" fill="none" stroke="#c8302a" stroke-width="1"/><path d="M6.9 4.4 V11" stroke="#e06a66" stroke-width="0.9"/></svg></div>
<div class="a" style="left:38.0px;top:527.2px;font-size:13px;line-height:16px;color:#444;white-space:nowrap">浦发银行抽1.08-88元支付宝红包</div>
<div class="a" style="left:259.0px;top:527.2px;width:100px;text-align:right;font-size:13px;line-height:16px;white-space:nowrap;color:#c9302c">11-20</div>
<div class="a" style="left:20.0px;top:555.5px;width:15px;height:13px"><svg class="ic" width="15" height="13" viewBox="0 0 15 13"><path d="M2.3 0.6 H11.8 L13.8 4.4 L6.9 11.9 L0.3 4.4 Z" fill="none" stroke="#c8302a" stroke-width="1.2" stroke-linejoin="round"/><path d="M0.9 4.4 H13.2 M2.3 0.6 L6.9 4 L11.8 0.6" fill="none" stroke="#c8302a" stroke-width="1"/><path d="M6.9 4.4 V11" stroke="#e06a66" stroke-width="0.9"/></svg></div>
<div class="a" style="left:38.0px;top:553.5px;font-size:13px;line-height:16px;color:#444;white-space:nowrap">支付宝语音唤醒服务抽最高88元支付宝红包</div>
<div class="a" style="left:259.0px;top:553.5px;width:100px;text-align:right;font-size:13px;line-height:16px;white-space:nowrap;color:#c9302c">11-20</div>
<div class="a" style="left:20.0px;top:581.8px;width:15px;height:13px"><svg class="ic" width="15" height="13" viewBox="0 0 15 13"><path d="M2.3 0.6 H11.8 L13.8 4.4 L6.9 11.9 L0.3 4.4 Z" fill="none" stroke="#c8302a" stroke-width="1.2" stroke-linejoin="round"/><path d="M0.9 4.4 H13.2 M2.3 0.6 L6.9 4 L11.8 0.6" fill="none" stroke="#c8302a" stroke-width="1"/><path d="M6.9 4.4 V11" stroke="#e06a66" stroke-width="0.9"/></svg></div>
<div class="a" style="left:38.0px;top:579.8px;font-size:13px;line-height:16px;color:#444;white-space:nowrap">建行CC豆上架2-500元支付宝红包/微信立减金</div>
<div class="a" style="left:259.0px;top:579.8px;width:100px;text-align:right;font-size:13px;line-height:16px;white-space:nowrap;color:#c9302c">11-20</div>
<div class="a" style="left:20.0px;top:608.0px;width:15px;height:13px"><svg class="ic" width="15" height="13" viewBox="0 0 15 13"><path d="M2.3 0.6 H11.8 L13.8 4.4 L6.9 11.9 L0.3 4.4 Z" fill="none" stroke="#c8302a" stroke-width="1.2" stroke-linejoin="round"/><path d="M0.9 4.4 H13.2 M2.3 0.6 L6.9 4 L11.8 0.6" fill="none" stroke="#c8302a" stroke-width="1"/><path d="M6.9 4.4 V11" stroke="#e06a66" stroke-width="0.9"/></svg></div>
<div class="a" style="left:38.0px;top:606.0px;font-size:13px;line-height:16px;color:#444;white-space:nowrap">蜜雪冰城雪王币抽3万份奶茶免单券</div>
<div class="a" style="left:259.0px;top:606.0px;width:100px;text-align:right;font-size:13px;line-height:16px;white-space:nowrap;color:#c9302c">11-20</div>
<div class="a" style="left:383.0px;top:446.5px;width:359.5px;height:112.0px;border:1px solid #eee;border-radius:3px"></div>
<div class="a" style="left:392.5px;top:457.0px;font-size:14px;line-height:18px;font-weight:bold;color:#333;white-space:nowrap">网站源码</div>
<div class="a" style="left:691.5px;top:456.0px;width:41px;height:19px;background:#e60012;color:#fff;font-size:12px;line-height:19px;text-align:center">更多</div>
<div class="a" style="left:383.0px;top:485.0px;width:359.5px;height:2px;background:#222"></div>
<div class="a" style="left:393.5px;top:503.0px;width:15px;height:13px"><svg class="ic" width="15" height="13" viewBox="0 0 15 13"><path d="M2.3 0.6 H11.8 L13.8 4.4 L6.9 11.9 L0.3 4.4 Z" fill="none" stroke="#c8302a" stroke-width="1.2" stroke-linejoin="round"/><path d="M0.9 4.4 H13.2 M2.3 0.6 L6.9 4 L11.8 0.6" fill="none" stroke="#c8302a" stroke-width="1"/><path d="M6.9 4.4 V11" stroke="#e06a66" stroke-width="0.9"/></svg></div>
<div class="a" style="left:411.5px;top:501.0px;font-size:13px;line-height:16px;color:#444;white-space:nowrap">新版游戏账号交易网站源码</div>
<div class="a" style="left:632.5px;top:501.0px;width:100px;text-align:right;font-size:13px;line-height:16px;white-space:nowrap;color:#999">11-19</div>
<div class="a" style="left:393.5px;top:529.2px;width:15px;height:13px"><svg class="ic" width="15" height="13" viewBox="0 0 15 13"><path d="M2.3 0.6 H11.8 L13.8 4.4 L6.9 11.9 L0.3 4.4 Z" fill="none" stroke="#c8302a" stroke-width="1.2" stroke-linejoin="round"/><path d="M0.9 4.4 H13.2 M2.3 0.6 L6.9 4 L11.8 0.6" fill="none" stroke="#c8302a" stroke-width="1"/><path d="M6.9 4.4 V11" stroke="#e06a66" stroke-width="0.9"/></svg></div>
<div class="a" style="left:411.5px;top:527.2px;font-size:13px;line-height:16px;color:#444;white-space:nowrap">素颜个人主页网址永久发布页</div>
<div class="a" style="left:632.5px;top:527.2px;width:100px;text-align:right;font-size:13px;line-height:16px;white-space:nowrap;color:#999">11-19</div>
<div class="a" style="left:757.0px;top:446.5px;width:359px;height:85.0px;border:1px solid #eee;border-radius:3px"></div>
<div class="a" style="left:766.5px;top:457.0px;font-size:14px;line-height:18px;font-weight:bold;color:#333;white-space:nowrap">软件仓库</div>
<div class="a" style="left:1065.0px;top:456.0px;width:41px;height:19px;background:#e60012;color:#fff;font-size:12px;line-height:19px;text-align:center">更多</div>
<div class="a" style="left:757.0px;top:485.0px;width:359px;height:2px;background:#222"></div>
<div class="a" style="left:767.5px;top:503.0px;width:15px;height:13px"><svg class="ic" width="15" height="13" viewBox="0 0 15 13"><path d="M2.3 0.6 H11.8 L13.8 4.4 L6.9 11.9 L0.3 4.4 Z" fill="none" stroke="#c8302a" stroke-width="1.2" stroke-linejoin="round"/><path d="M0.9 4.4 H13.2 M2.3 0.6 L6.9 4 L11.8 0.6" fill="none" stroke="#c8302a" stroke-width="1"/><path d="M6.9 4.4 V11" stroke="#e06a66" stroke-width="0.9"/></svg></div>
<div class="a" style="left:785.5px;top:501.0px;font-size:13px;line-height:16px;color:#444;white-space:nowrap">WEB界面RMBG2.0抠图离线1.1版</div>
<div class="a" style="left:1006.0px;top:501.0px;width:100px;text-align:right;font-size:13px;line-height:16px;white-space:nowrap;color:#999">11-19</div>
</div>
</div>

<!-- SEO card -->
<div class="card" style="left:45px;top:859px;width:1240px;height:215px"></div>
<svg class="abs" style="left:85px;top:903px" width="26" height="26" viewBox="0 0 26 26"><circle cx="10.5" cy="10.5" r="8.2" fill="none" stroke="#165dff" stroke-width="3.2"/><path d="M16.8 16.8 L24 24" stroke="#165dff" stroke-width="3.4" stroke-linecap="round"/></svg>
<div class="abs" style="left:120px;top:902px;font-size:24px;line-height:30px;font-weight:bold;color:#1a1a1a;white-space:nowrap;letter-spacing:0.5px">网站SEO介绍</div>
<div class="abs" style="left:85px;top:954px;font-size:20px;line-height:30px;color:#333;white-space:nowrap"><span id="p1">235资源网是一个专业的网络资源分享平台,提供各种PHP源码、网站源码、游戏源</span><br><span id="p2">码、模板插件、软件工具、网络教程、活动线报等,为中国站长提供一站式资源下载。</span></div>

<!-- features card -->
<div class="card" style="left:45px;top:1104px;width:1240px;height:400px"></div>
<svg class="abs" style="left:85px;top:1149px" width="26" height="23" viewBox="0 0 26 23"><path d="M0 2.5 Q0 0 2.5 0 H10.5 Q11.6 0 12.4 0.8 L20.2 8.6 Q21.6 10 20.2 11.4 L12.7 18.9 Q11.3 20.3 9.9 18.9 L0.8 9.8 Q0 9 0 7.9 Z" fill="#165dff"/><circle cx="5" cy="4.6" r="1.9" fill="#fff"/><path d="M14.8 0.5 L23.6 9.3 Q24.9 10.6 23.6 11.9 L15.2 20.3" fill="none" stroke="#165dff" stroke-width="2.2" stroke-linecap="round"/></svg>
<div class="abs" style="left:121px;top:1147px;font-size:24px;line-height:30px;font-weight:bold;color:#1a1a1a;white-space:nowrap;letter-spacing:0.8px">网站特性</div>
<div class="abs" style="left:85px;top:1199px;width:570px;height:120px;border-radius:12px;background:#f9f9f9"></div>
<div class="abs" style="left:675px;top:1199px;width:570px;height:120px;border-radius:12px;background:#f9f9f9"></div>
<div class="abs" style="left:100.5px;top:1214px;width:39px;height:39px;border-radius:50%;background:#dcf9e4"></div>
<div class="abs" style="left:690.5px;top:1214px;width:39px;height:39px;border-radius:50%;background:#dcf9e4"></div>
<svg class="abs" style="left:113px;top:1225px" width="16" height="16" viewBox="0 0 16 16"><path d="M8 1 L14 8 L8 15 L2 8 Z" fill="#16a34a"/></svg>
<svg class="abs" style="left:703px;top:1225px" width="16" height="16" viewBox="0 0 16 16"><path d="M8 1 L14 8 L8 15 L2 8 Z" fill="#16a34a"/></svg>
<div class="abs" style="left:156px;top:1216px;font-size:20px;line-height:26px;color:#222;white-space:nowrap">界面简洁</div>
<div class="abs" style="left:746px;top:1216px;font-size:20px;line-height:26px;color:#222;white-space:nowrap">资源丰富</div>

<!-- related card -->
<div class="card" style="left:1325px;top:859px;width:600px;height:185px"></div>
<svg class="abs" style="left:1350px;top:888px" width="42" height="36" viewBox="0 0 42 36"><path d="M16.8 26.4 C14 28.5 9.5 28.5 7.2 25.5 C5 22.5 5.8 18.5 8.5 16 L13.5 11.5 C16.5 9 21 9.5 23.5 13 C25 15.5 24.5 18 23.1 19.8" fill="none" stroke="#165dff" stroke-width="3" stroke-linecap="round"/><path d="M18.5 15.2 C16.8 17.5 16.8 20.5 18.8 22.8 C21.5 25.5 25 25.3 27.5 22.8 L32.5 17.8 C35.2 15 35 11 32.2 8.3 C30 6.3 26.8 6.5 24.9 8.5" fill="none" stroke="#165dff" stroke-width="3" stroke-linecap="round"/></svg>
<div class="abs" style="left:1396px;top:893px;font-size:25px;line-height:30px;font-weight:bold;color:#1a1a1a;white-space:nowrap">相关推荐</div>
<div class="abs" style="left:1325px;top:966px;width:600px;text-align:center;font-size:20px;line-height:26px;color:#666">暂无相关推荐链接</div>

<!-- stats card -->
<div class="card" style="left:1325px;top:1074px;width:600px;height:400px"></div>
<svg class="abs" style="left:1355px;top:1110px" width="26" height="22" viewBox="0 0 26 22"><path d="M1.5 1.5 V20.5 H24.5" fill="none" stroke="#165dff" stroke-width="2.6" stroke-linecap="round" stroke-linejoin="round"/><path d="M6.5 14 L11.5 8.5 L15.5 11.5 L23.5 4" fill="none" stroke="#165dff" stroke-width="2.6" stroke-linecap="round" stroke-linejoin="round"/></svg>
<div class="abs" style="left:1390px;top:1107px;font-size:24px;line-height:30px;font-weight:bold;color:#1a1a1a;white-space:nowrap;letter-spacing:1.1px">网站统计 (分析域名: 235w.cn)</div>
<div class="abs" style="left:1355px;top:1159px;font-size:18px;line-height:24px;color:#666;white-space:nowrap">百度权重 (PC)</div>
<div class="abs" style="left:1695px;top:1159px;width:200px;text-align:right;font-size:18px;line-height:24px;color:#333">0</div>
<div class="abs" style="left:1355px;top:1189px;width:540px;height:10px;border-radius:5px;background:#e5e7eb"></div>
<div class="abs" style="left:1355px;top:1219px;font-size:18px;line-height:24px;color:#666;white-space:nowrap">预计来路</div>
<div class="abs" style="left:1695px;top:1219px;width:200px;text-align:right;font-size:18px;line-height:24px;color:#333;word-spacing:3px">0 - 0</div>

</body></html>
